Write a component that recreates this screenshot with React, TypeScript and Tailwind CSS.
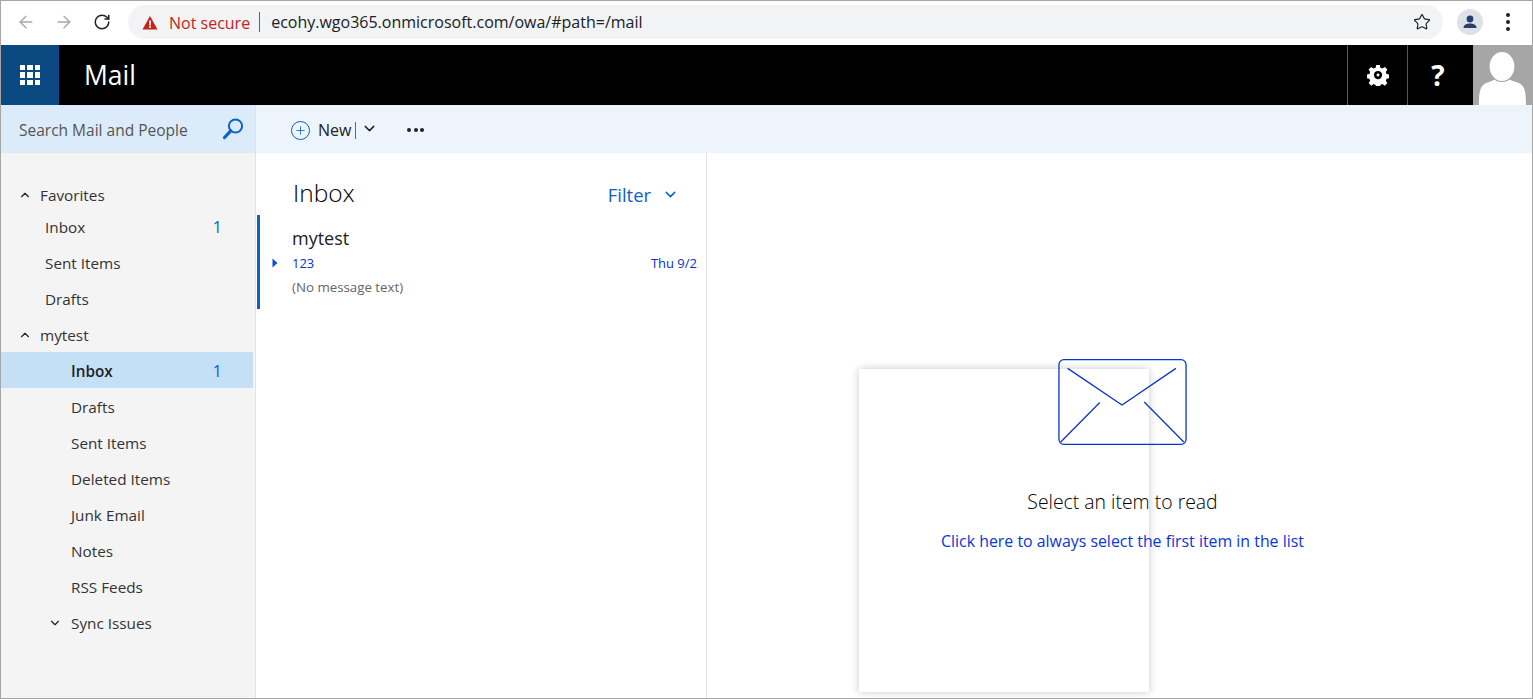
import { ArrowLeft, ArrowRight, RotateCw, Star, ChevronUp, ChevronDown, Plus } from "lucide-react";

const favorites = [
  { name: "Inbox", count: "1" },
  { name: "Sent Items" },
  { name: "Drafts" },
];

const folders = ["Drafts", "Sent Items", "Deleted Items", "Junk Email", "Notes", "RSS Feeds"];

const BrowserBar = () => (
  <div className="flex h-11 items-center bg-white pb-[2px]">
    <div className="flex w-[127px] shrink-0 items-center pl-[15px]">
      <ArrowLeft size={20} strokeWidth={1.6} className="text-[#a4a6a8]" />
      <ArrowRight size={20} strokeWidth={1.6} className="ml-[18px] text-[#a4a6a8]" />
      <RotateCw size={18} strokeWidth={2} className="ml-[19px] text-[#202124]" />
    </div>
    <div className="flex h-[34px] w-[1315px] items-center rounded-full bg-[#f1f3f4] pl-[14px] pr-[12px]">
      <svg width="16" height="15" viewBox="0 0 16 15">
        <path d="M8 1 L15.5 14.5 H0.5 Z" fill="#c5221f" />
        <rect x="7.2" y="5.5" width="1.7" height="5" fill="#fff" />
        <rect x="7.2" y="11.2" width="1.7" height="1.7" fill="#fff" />
      </svg>
      <span className="ml-[11px] pt-[1px] text-[16px] text-[#c5221f]">Not secure</span>
      <span className="ml-[9px] h-[20px] w-px bg-[#5f6368]" />
      <span className="ml-[11px] text-[16px] text-[#202124]">ecohy.wgo365.onmicrosoft.com/owa/#path=/mail</span>
      <Star size={18} strokeWidth={1.6} className="ml-auto text-[#202124]" />
    </div>
    <div className="ml-[14px] flex h-[26px] w-[26px] items-center justify-center rounded-full bg-[#dfe1e8]">
      <svg width="16" height="16" viewBox="0 0 16 16" fill="#28406a">
        <circle cx="8" cy="5" r="3.4" />
        <path d="M1.5 14 C1.5 10.5 5 9.5 8 9.5 C11 9.5 14.5 10.5 14.5 14 Z" />
      </svg>
    </div>
    <div className="ml-[23px] flex flex-col gap-[3.5px]">
      <span className="h-[3.5px] w-[3.5px] rounded-full bg-[#202124]" />
      <span className="h-[3.5px] w-[3.5px] rounded-full bg-[#202124]" />
      <span className="h-[3.5px] w-[3.5px] rounded-full bg-[#202124]" />
    </div>
  </div>
);

const Waffle = () => (
  <div className="grid grid-cols-3 gap-[2px]">
    {Array.from({ length: 9 }).map((_, i) => (
      <span key={i} className="h-[5.5px] w-[5.5px] bg-white" />
    ))}
  </div>
);

const HeaderBar = () => (
  <div className="flex h-[60px] items-stretch bg-black">
    <div className="flex w-[58px] items-center justify-center bg-[#0b4a80]">
      <Waffle />
    </div>
    <div className="flex items-center pt-[1px] pl-[25px] text-[26.5px] text-white">Mail</div>
    <div className="ml-auto flex w-[60px] items-center justify-center border-l border-[#595959]">
      <svg width="22" height="22" viewBox="0 0 24 24" fill="#fff">
        <path
          fillRule="evenodd"
          d="M10 1h4l.6 3 2.2.9 2.6-1.7 2.8 2.8-1.7 2.6.9 2.2 3 .6v4l-3 .6-.9 2.2 1.7 2.6-2.8 2.8-2.6-1.7-2.2.9-.6 3h-4l-.6-3-2.2-.9-2.6 1.7-2.8-2.8 1.7-2.6-.9-2.2-3-.6v-4l3-.6.9-2.2L1.8 6l2.8-2.8 2.6 1.7 2.2-.9zM12 7.5a4.5 4.5 0 1 0 0 9 4.5 4.5 0 0 0 0-9z"
        />
        <circle cx="12" cy="12" r="1.6" />
      </svg>
    </div>
    <div className="flex w-[66px] items-center justify-center border-l border-[#595959] pr-[5px] text-[28px] font-bold text-white">?</div>
    <div className="w-[59px] overflow-hidden bg-[#a6a6a6]">
      <svg width="59" height="60" viewBox="0 0 59 60" fill="#fff">
        <path d="M6 60 C6 44 8 39 16 37 C20 36 22 34 23 33 L35 33 C36 34 38 36 43 37 C51 39 53 44 53 60 Z" />
        <ellipse cx="29" cy="21.5" rx="13" ry="15" stroke="#a6a6a6" strokeWidth="1.2" />
      </svg>
    </div>
  </div>
);

const Toolbar = () => (
  <div className="flex h-12 items-stretch">
    <div className="flex w-[255px] items-center justify-between border-r border-[#dfe3e8] bg-[#dcebf9] pl-[18px] pr-[10px]">
      <span className="pt-[4px] text-[15.5px] text-[#555]">Search Mail and People</span>
      <svg width="24" height="24" viewBox="0 0 24 24" fill="none" stroke="#0b62c4">
        <circle cx="14.5" cy="9" r="6.6" strokeWidth="2" />
        <path d="M9.8 13.8 L3.5 20.5" strokeWidth="3.2" strokeLinecap="round" />
      </svg>
    </div>
    <div className="flex flex-1 items-center bg-[#edf4fb] pl-[35px] pt-[2px]">
      <span className="flex h-[19px] w-[19px] items-center justify-center rounded-full border border-[#0b62c4]">
        <Plus size={13} strokeWidth={1.5} className="text-[#0b62c4]" />
      </span>
      <span className="ml-[8px] text-[16px] text-[#222]">New</span>
      <span className="ml-[4px] h-[17px] w-px bg-[#666]" />
      <ChevronDown size={17} strokeWidth={2} className="ml-[5px] mb-[3px] text-[#222]" />
      <div className="ml-[29px] flex gap-[2.5px]">
        <span className="h-1 w-1 rounded-full bg-[#222]" />
        <span className="h-1 w-1 rounded-full bg-[#222]" />
        <span className="h-1 w-1 rounded-full bg-[#222]" />
      </div>
    </div>
  </div>
);

const GroupRow = ({ name, short }: { name: string; short?: boolean }) => (
  <div className={short ? "flex h-8 items-center pl-[17px] pt-[4px] text-[15.3px] text-[#333]" : "flex h-9 items-center pl-[17px] text-[15.3px] text-[#333]"}>
    <ChevronUp size={14} strokeWidth={2} className="text-[#222]" />
    <span className="ml-[8px]">{name}</span>
  </div>
);

const Sidebar = () => (
  <div className="w-[255px] shrink-0 border-r border-[#e3e3e3] bg-[#f4f4f4] pt-[24px]">
    <GroupRow name="Favorites" short />
    {favorites.map((item) => (
      <div key={item.name} className="flex h-9 items-center justify-between pl-[44px] pr-[33px] text-[15.3px] text-[#333]">
        <span>{item.name}</span>
        {item.count && <span className="text-[16px] text-[#0b62c4]">{item.count}</span>}
      </div>
    ))}
    <GroupRow name="mytest" />
    <div className="mr-[2px] -mt-px mb-px flex h-9 items-center justify-between bg-[#c4e0f6] pl-[70px] pr-[31px] pt-[2px] text-[15.3px] font-semibold text-[#222]">
      <span>Inbox</span>
      <span className="text-[16px] font-normal text-[#0b62c4]">1</span>
    </div>
    {folders.map((name) => (
      <div key={name} className="flex h-9 items-center pl-[70px] text-[15.3px] text-[#333]">
        {name}
      </div>
    ))}
    <div className="flex h-9 items-center pl-[47px] text-[15.3px] text-[#333]">
      <ChevronDown size={14} strokeWidth={2} className="text-[#222]" />
      <span className="ml-[9px]">Sync Issues</span>
    </div>
  </div>
);

const MessageList = () => (
  <div className="w-[451px] shrink-0 border-r border-[#e3e3e3] bg-white">
    <div className="flex h-[62px] items-center justify-between pl-[37px] pr-[27px] pt-[19px]">
      <span className="text-[24.5px] font-light text-black">Inbox</span>
      <span className="flex items-center pt-[2px] text-[18.4px] text-[#0b62c4]">
        Filter
        <ChevronDown size={17} strokeWidth={2} className="ml-[11px]" />
      </span>
    </div>
    <div className="ml-[1px] h-[94px] border-l-[3px] border-[#0b62c4] pt-[10px]">
      <div className="pl-[32px] text-[18px] leading-[27px] text-[#222]">mytest</div>
      <div className="flex items-center pr-[9px] text-[13px] leading-[22px] text-[#0a2fd0]">
        <svg width="6" height="10" viewBox="0 0 6 10" className="ml-[12px]" fill="#0b50d0">
          <path d="M0.5 0.5 L5.5 5 L0.5 9.5 Z" />
        </svg>
        <span className="ml-[14px]">123</span>
        <span className="ml-auto">Thu 9/2</span>
      </div>
      <div className="pl-[32px] pt-[2px] text-[13.3px] leading-[22px] text-[#666]">(No message text)</div>
    </div>
  </div>
);

const ReadingPane = () => (
  <div className="relative flex-1 bg-white">
    <div className="absolute left-[152px] top-[216px] h-[323px] w-[290px] bg-white shadow-[0_0_8px_rgba(0,0,0,0.22)]" />
    <div className="relative flex flex-col items-center pl-[6px] pt-[206px]">
      <svg width="129" height="86" viewBox="0 0 130 87" fill="none" stroke="#0a35c8" strokeWidth="1.3">
        <rect x="0.7" y="0.7" width="128.6" height="85.6" rx="5" />
        <path d="M9.5 9.5 L64.5 46.5 L119 9.5" />
        <path d="M42 44 L2.5 84" />
        <path d="M87 43.5 L127 84" />
      </svg>
      <div className="mt-[44px] text-[19.4px] font-light leading-[26px] text-black">Select an item to read</div>
      <div className="mt-[14px] text-[15.9px] leading-[24px] text-[#0a35d8]">Click here to always select the first item in the list</div>
    </div>
  </div>
);

export default function App() {
  return (
    <div
      className="flex h-[699px] w-[1533px] flex-col overflow-hidden border border-[#a6a6a6] bg-white"
      style={{ fontFamily: '"Open Sans", "Noto Sans", sans-serif' }}
    >
      <BrowserBar />
      <HeaderBar />
      <Toolbar />
      <div className="flex flex-1 overflow-hidden">
        <Sidebar />
        <MessageList />
        <ReadingPane />
      </div>
    </div>
  );
}
